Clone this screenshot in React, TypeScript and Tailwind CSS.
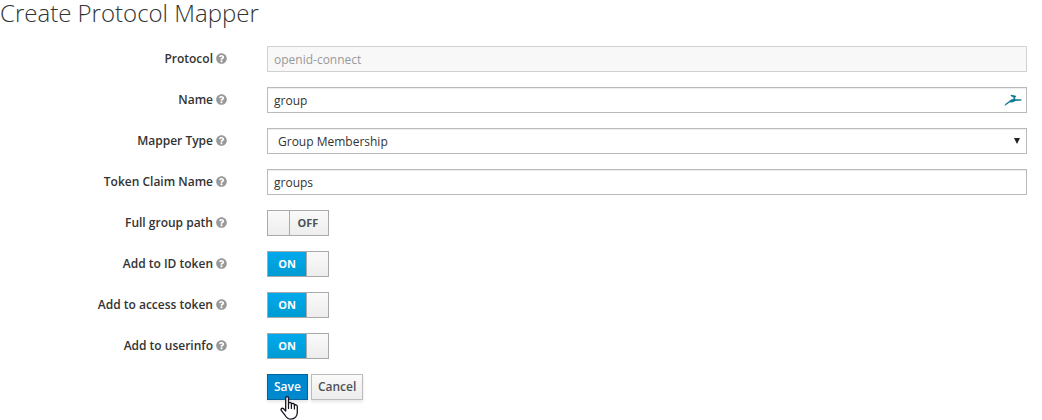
import { useId, useState } from "react";
import type { ReactNode } from "react";
import { FaQuestionCircle } from "react-icons/fa";

function Row({ label, htmlFor, children }: { label?: string; htmlFor?: string; children: ReactNode }) {
  return (
    <div className="grid grid-cols-[227px_minmax(0,1fr)] gap-x-10">
      {label ? (
        <label htmlFor={htmlFor} className="flex h-[25px] items-center justify-end gap-[3px] font-semibold text-[#333333]">
          {label}
          <FaQuestionCircle aria-hidden="true" className="size-[11px] text-[#999999]" />
        </label>
      ) : (
        <span />
      )}
      <div className="flex h-[26px] items-center">{children}</div>
    </div>
  );
}

const fieldClass =
  "h-[26px] w-full border border-[#bababa] bg-white px-[6px] text-xs text-[#333333] shadow-[inset_0_1px_1px_rgba(0,0,0,0.075)] outline-none focus:border-[#0088ce] disabled:border-[#d1d1d1] disabled:bg-[#f8f8f8] disabled:text-[#999999] disabled:shadow-none";

function TextRow({ label, value, disabled, icon }: { label: string; value: string; disabled?: boolean; icon?: ReactNode }) {
  const id = useId();
  return (
    <Row label={label} htmlFor={id}>
      <div className="relative w-full">
        <input id={id} type="text" defaultValue={value} disabled={disabled} className={fieldClass + " block"} />
        {icon}
      </div>
    </Row>
  );
}

function SwitchRow({ label, initial }: { label: string; initial: boolean }) {
  const id = useId();
  const [on, setOn] = useState(initial);
  return (
    <Row label={label} htmlFor={id}>
      <label className="relative flex h-[26px] w-[62px] shrink-0 cursor-pointer border border-[#aaaaaa] bg-linear-to-b from-[#fafafa] to-[#ededed] text-[11px] font-bold">
        <input
          id={id}
          type="checkbox"
          checked={on}
          onChange={(e) => setOn(e.target.checked)}
          className="absolute inset-0 size-full cursor-pointer opacity-0"
        />
        {on ? (
          <>
            <span className="flex flex-1 items-center justify-center bg-linear-to-b from-[#00a9ec] to-[#009bd3] text-white">ON</span>
            <span className="w-[22px] border-l border-[#aaaaaa]" />
          </>
        ) : (
          <>
            <span className="w-[22px] border-r border-[#aaaaaa]" />
            <span className="flex flex-1 items-center justify-center pr-[2px] text-[#4d5258]">OFF</span>
          </>
        )}
      </label>
    </Row>
  );
}

function HummingbirdMark() {
  return (
    <svg aria-hidden="true" viewBox="0 0 18 13" className="pointer-events-none absolute top-[7px] right-[5px] h-[13px] w-[18px]">
      <path
        d="M0.5 12 L1.5 9.8 L5 7.3 L7 5.4 L9.5 5 L9.3 3.2 L6.6 1.9 L7 0.8 L11 1.4 L12.4 2.3 L11.2 3.4 L11.2 5.2 L17.5 5.3 L17.5 6.6 L11.5 7 L9 8.2 L5.5 8.4 L2.5 10.8 Z"
        fill="#0e7c96"
      />
    </svg>
  );
}

function HandPointer() {
  return (
    <svg aria-hidden="true" viewBox="0 0 19 24" className="pointer-events-none absolute top-[22px] left-[13px] h-6 w-[19px]">
      <path
        d="M5.7 15 V2.2 C5.7 0.2 8.5 0.2 8.5 2.2 V8 C8.6 5.8 11.4 6 11.4 8 V8.8 C11.6 6.9 14.4 7.1 14.4 9 V9.8 C14.7 8.2 17.3 8.5 17.3 10.4 V16.5 C17.3 20 15 23.2 10.8 23.2 C7.3 23.2 6.3 21.3 5 19.2 L1.4 14.6 C0.3 12.9 2.1 11.6 3.6 12.8 Z"
        fill="#ffffff"
        stroke="#15151f"
        strokeWidth="1.3"
        strokeLinejoin="round"
      />
      <path d="M8.5 8 V12.5 M11.4 8.8 V12.5 M14.4 9.8 V13" fill="none" stroke="#15151f" strokeWidth="1.2" strokeLinecap="round" />
    </svg>
  );
}

export default function App() {
  const typeId = useId();
  return (
    <main className="bg-white pb-5 font-['Open_Sans',sans-serif] text-xs text-[#333333]">
      <h1 className="text-2xl leading-[26px] font-light">Create Protocol Mapper</h1>
      <form className="mt-5 flex flex-col gap-[15px] pr-[15px]" onSubmit={(e) => e.preventDefault()}>
        <TextRow label="Protocol" value="openid-connect" disabled />
        <TextRow label="Name" value="group" icon={<HummingbirdMark />} />
        <Row label="Mapper Type" htmlFor={typeId}>
          <div className="relative w-full">
            <select id={typeId} className={fieldClass + " block appearance-none pt-[2px] pl-[10px]"}>
              <option>Group Membership</option>
            </select>
            <svg aria-hidden="true" viewBox="0 0 6 6" className="pointer-events-none absolute top-[10px] right-[7px] size-[6px]">
              <path d="M0 0 H6 L3 6 Z" fill="#222222" />
            </svg>
          </div>
        </Row>
        <TextRow label="Token Claim Name" value="groups" />
        <SwitchRow label="Full group path" initial={false} />
        <SwitchRow label="Add to ID token" initial />
        <SwitchRow label="Add to access token" initial />
        <SwitchRow label="Add to userinfo" initial />
        <Row>
          <div className="relative flex gap-[3px]">
            <button
              type="submit"
              className="h-[26px] border border-[#00659c] bg-[#0088ce] px-[6px] font-semibold text-white shadow-[0_2px_3px_rgba(0,0,0,0.1)]"
            >
              Save
            </button>
            <button
              type="button"
              className="h-[26px] border border-[#bbbbbb] bg-linear-to-b from-[#fafafa] to-[#ededed] px-[6px] font-semibold text-[#4d5258] shadow-[0_2px_3px_rgba(0,0,0,0.1)]"
            >
              Cancel
            </button>
            <HandPointer />
          </div>
        </Row>
      </form>
    </main>
  );
}
